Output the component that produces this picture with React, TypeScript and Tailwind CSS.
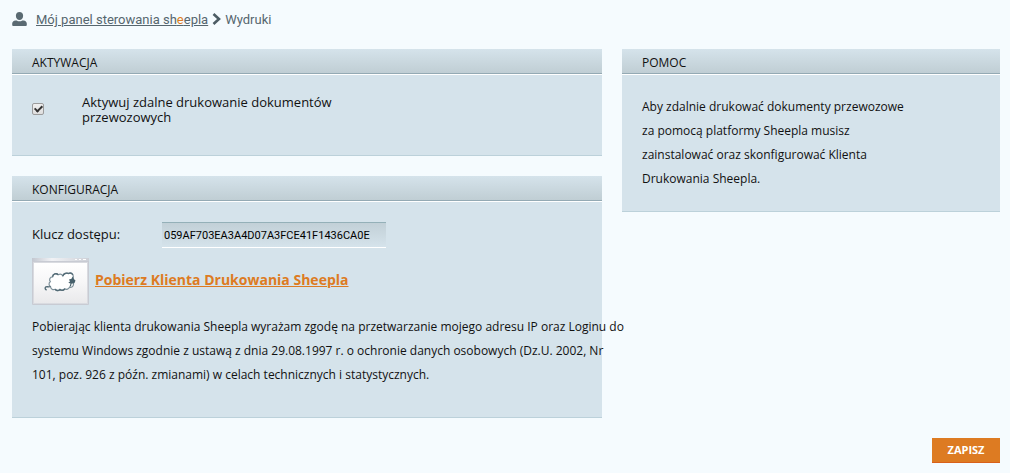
import { useState } from 'react'
import type { ReactNode } from 'react'

type PanelProps = {
  title: string
  children: ReactNode
}

const Panel = ({ title, children }: PanelProps) => (
  <section className="border-b border-[#bcd1da] bg-[#d5e3eb]">
    <h2 className="border-b border-white bg-white text-xs text-[#111]">
      <span className="block border-b border-[#94aab4] bg-linear-to-b from-[#d5e3eb] to-[#c0ced4] pt-1 pl-5 leading-5 uppercase">
        {title}
      </span>
    </h2>
    {children}
  </section>
)

const UserIcon = () => (
  <svg width="16" height="14" viewBox="0 0 16 14" fill="#5a6a72" aria-hidden="true">
    <path d="M7.500 0c2.300 0 3.600 1.500 3.600 3.700 0 2.300-1.400 4.300-3.600 4.300S3.900 6 3.900 3.700C3.900 1.500 5.200 0 7.500 0z" />
    <path d="M3.500 8.400h1.300c.7.600 1.600.9 2.700.9s2-.3 2.700-.9h1.300c2 0 3.300 1.300 3.300 3.200V13c0 .6-.3.900-.9.900H1.100c-.6 0-.9-.3-.9-.9v-1.400c0-1.900 1.300-3.200 3.300-3.200z" />
  </svg>
)

const ChevronIcon = () => (
  <svg width="9" height="12" viewBox="0 0 9 12" fill="none" stroke="#4c5c64" strokeWidth="2.600" aria-hidden="true">
    <path d="M1.500 1l5.500 5-5.500 5" />
  </svg>
)

// Small application window with the sheep logo in it
const SheepWindow = () => (
  <svg width="57" height="47" viewBox="0 0 57 47" className="shrink-0" aria-hidden="true">
    <defs>
      <linearGradient id="window" x1="0" y1="0" x2="0" y2="1">
        <stop offset="0" stopColor="#fff" />
        <stop offset="0.500" stopColor="#f6f6f7" />
        <stop offset="1" stopColor="#e9e9eb" />
      </linearGradient>
      <linearGradient id="frame" x1="0" y1="0" x2="1" y2="0">
        <stop offset="0" stopColor="#c3c7d0" />
        <stop offset="0.350" stopColor="#f1f2f5" />
        <stop offset="1" stopColor="#cdd0d7" />
      </linearGradient>
    </defs>
    <rect width="57" height="47" rx="1" fill="#c8cbd3" />
    <rect width="57" height="3" fill="url(#frame)" />
    <path d="M43 1.500h2m2 0h2m2 0h3" stroke="#fff" />
    <rect x="1.500" y="4.500" width="54" height="41" fill="url(#window)" stroke="#d9dbe0" />
    <path
      d="M18.500 28.500a2.800 2.800 0 0 1-.2-4.800 3 3 0 0 1 2.300-4.900 3.300 3.300 0 0 1 5.600-2.100 3.400 3.400 0 0 1 4.600 1.200 4.300 4.300 0 0 1 5.700-2.400 3.200 3.200 0 0 1 4.800 2.800l.2 8a3.200 3.200 0 0 1-4 3 3.300 3.300 0 0 1-4.700 1.500 3.500 3.500 0 0 1-4.800.7 3.500 3.500 0 0 1-4.900-.2 3.200 3.200 0 0 1-4.600-2.800z"
      fill="#fff"
      stroke="#7d909a"
      strokeWidth="1.200"
    />
    <path
      d="M20.600 18.800a3.300 3.300 0 0 1 5.600-2.100M30.800 17.900a4.300 4.300 0 0 1 5.700-2.400 3.200 3.200 0 0 1 4.300 1.400M23.100 31.300a3.500 3.500 0 0 0 4.900.2 3.500 3.500 0 0 0 4.800-.7M18.500 28.500c-2.200 1.200-3.600-.6-4.900.6-.9 1-.4 2.300 1 2.900"
      fill="none"
      stroke="#536b76"
      strokeWidth="1.400"
    />
    <path d="M37 21.500l2.500-.7 1-2.300 1 2.200 2 1.800-1 2.500-3 .8-.5 2.500-1.500.5 1-3.300-2.200-.7 1.700-1.300z" fill="#46606b" />
  </svg>
)

const App = () => {
  const [active, setActive] = useState(true)
  const [accessKey, setAccessKey] = useState('059AF703EA3A4D07A3FCE41F1436CA0E')

  return (
    <div className="min-h-screen bg-[#f5fbfe] pt-2 pr-2.5 pb-2.5 pl-3 font-['Open_Sans','Noto_Sans',sans-serif] text-xs text-[#111]">
      <nav className="flex h-[41px] items-start font-['Roboto',sans-serif] text-[13px] leading-6 text-[#56666e]">
        <span className="mt-1 mr-2">
          <UserIcon />
        </span>
        <a href="#panel" className="underline">
          Mój panel sterowania sh<span className="text-[#dd7b22]">e</span>epla
        </a>
        <span className="mx-1 mt-[5px]">
          <ChevronIcon />
        </span>
        <span>Wydruki</span>
      </nav>

      <form onSubmit={(e) => e.preventDefault()}>
        <div className="flex items-start gap-5">
          <div className="flex min-w-0 flex-[590] flex-col gap-5">
            <Panel title="Aktywacja">
              <div className="flex items-start px-5 pt-5 pb-[30px]">
                <input
                  id="active"
                  type="checkbox"
                  checked={active}
                  onChange={(e) => setActive(e.target.checked)}
                  className="mt-2 grid size-3 shrink-0 appearance-none place-items-center rounded-[2px] border border-[#9c9c9c] bg-linear-to-b from-[#f0f0f0] to-[#dedede] before:mb-0.5 before:h-2 before:w-[5px] before:rotate-45 before:border-r-2 before:border-b-2 before:border-[#333] before:opacity-0 checked:before:opacity-100"
                />
                <label htmlFor="active" className="ml-[38px] w-[270px] text-[13px] leading-[15px]">
                  Aktywuj zdalne drukowanie dokumentów przewozowych
                </label>
              </div>
            </Panel>

            <Panel title="Konfiguracja">
              <div className="px-5 pt-5 pb-[30px]">
                <div className="flex items-center">
                  <label htmlFor="key" className="w-[130px] text-[13px]">
                    Klucz dostępu:
                  </label>
                  <input
                    id="key"
                    type="text"
                    value={accessKey}
                    onChange={(e) => setAccessKey(e.target.value)}
                    className="h-[26px] w-56 border-t border-b border-t-[#94b0b8] border-b-white bg-linear-to-b from-[#c2d0d7] to-[#d5e3eb] px-0.5 font-['Roboto',sans-serif] text-[11px] text-black"
                  />
                </div>
                <div className="mt-2.5 flex items-start gap-1.5">
                  <SheepWindow />
                  <a href="#download" className="mt-3 text-sm font-bold text-[#dd7b22] underline">
                    Pobierz Klienta Drukowania Sheepla
                  </a>
                </div>
                {/* wider than the panel, runs over its right edge */}
                <p className="mt-2.5 w-[596px] leading-6">
                  Pobierając klienta drukowania Sheepla wyrażam zgodę na przetwarzanie mojego adresu IP oraz Loginu do
                  systemu Windows zgodnie z ustawą z dnia 29.08.1997 r. o ochronie danych osobowych (Dz.U. 2002, Nr
                  101, poz. 926 z późn. zmianami) w celach technicznych i statystycznych.
                </p>
              </div>
            </Panel>
          </div>

          <aside className="min-w-0 flex-[378]">
            <Panel title="Pomoc">
              <p className="max-w-[316px] px-5 pt-5 pb-5 leading-6">
                Aby zdalnie drukować dokumenty przewozowe za pomocą platformy Sheepla musisz zainstalować oraz
                skonfigurować Klienta Drukowania Sheepla.
              </p>
            </Panel>
          </aside>
        </div>

        <div className="mt-5 flex justify-end">
          <button
            type="submit"
            className="h-[25px] w-[68px] border-b border-[#d9601a] bg-[#dd7b22] text-[11px] font-bold text-white"
          >
            ZAPISZ
          </button>
        </div>
      </form>
    </div>
  )
}

export default App
